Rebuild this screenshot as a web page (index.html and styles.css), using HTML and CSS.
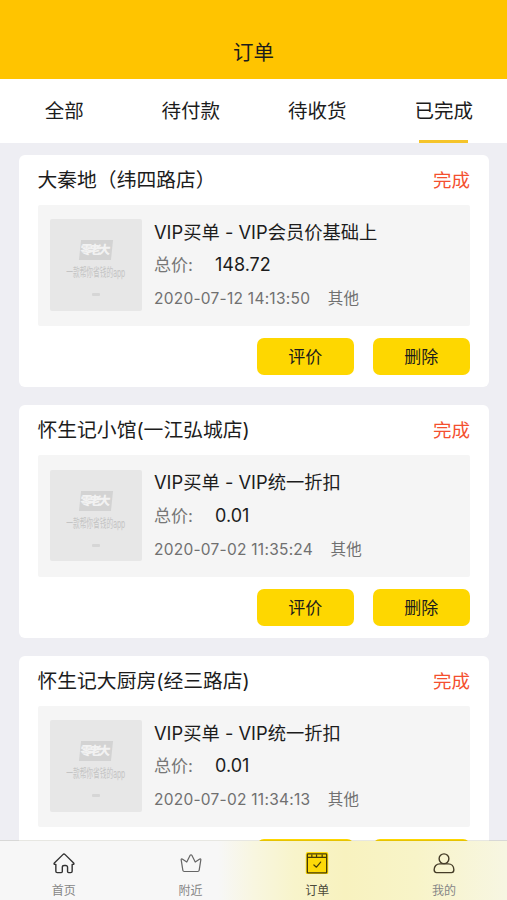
FILE: index.html
```html
<!DOCTYPE html>
<html lang="zh-CN">
<head>
<meta charset="utf-8">
<title>订单</title>
<link rel="stylesheet" href="styles.css">
</head>
<body>
<div class="app">
  <header class="header"><h1>订单</h1></header>
  <nav class="tabs">
    <a class="tab">全部</a>
    <a class="tab">待付款</a>
    <a class="tab">待收货</a>
    <a class="tab active">已完成</a>
  </nav>
  <main class="orders">
    <article class="card">
      <div class="card-head"><h2>大秦地（纬四路店）</h2><span class="status">完成</span></div>
      <div class="product">
        <div class="thumb"><span class="brand">零老大</span><span class="slogan">一款帮你省钱的app</span><span class="dots"></span></div>
        <div class="info">
          <p class="name">VIP买单 - VIP会员价基础上</p>
          <p class="price"><span class="label">总价:</span><span class="amount">148.72</span></p>
          <p class="meta"><time>2020-07-12 14:13:50</time><span>其他</span></p>
        </div>
      </div>
      <div class="actions"><button class="btn">评价</button><button class="btn">删除</button></div>
    </article>
    <article class="card">
      <div class="card-head"><h2>怀生记小馆(一江弘城店)</h2><span class="status">完成</span></div>
      <div class="product">
        <div class="thumb"><span class="brand">零老大</span><span class="slogan">一款帮你省钱的app</span><span class="dots"></span></div>
        <div class="info">
          <p class="name">VIP买单 - VIP统一折扣</p>
          <p class="price"><span class="label">总价:</span><span class="amount">0.01</span></p>
          <p class="meta"><time>2020-07-02 11:35:24</time><span>其他</span></p>
        </div>
      </div>
      <div class="actions"><button class="btn">评价</button><button class="btn">删除</button></div>
    </article>
    <article class="card">
      <div class="card-head"><h2>怀生记大厨房(经三路店)</h2><span class="status">完成</span></div>
      <div class="product">
        <div class="thumb"><span class="brand">零老大</span><span class="slogan">一款帮你省钱的app</span><span class="dots"></span></div>
        <div class="info">
          <p class="name">VIP买单 - VIP统一折扣</p>
          <p class="price"><span class="label">总价:</span><span class="amount">0.01</span></p>
          <p class="meta"><time>2020-07-02 11:34:13</time><span>其他</span></p>
        </div>
      </div>
      <div class="actions"><button class="btn">评价</button><button class="btn">删除</button></div>
    </article>
  </main>
  <nav class="tabbar">
    <a class="item">
      <svg class="icon" viewBox="0 0 24 24"><path stroke="#333" d="M3.300 13.200H2.300c-.9 0-1.200-.8-.6-1.400L10.800 2.800c.7-.7 1.700-.7 2.400 0l9.100 9c.6.6.3 1.400-.6 1.400h-1v7.300c0 .9-.6 1.500-1.500 1.500h-2.300c-.7 0-1.100-.4-1.100-1.100v-4.600c0-1.200-.8-1.900-2-1.900h-1.600c-1.200 0-2 .7-2 1.900v4.600c0 .7-.4 1.100-1.100 1.100H4.800c-.9 0-1.500-.6-1.500-1.500z"/></svg>
      <span>首页</span>
    </a>
    <a class="item">
      <svg class="icon" viewBox="0 0 24 24"><path stroke="#666" stroke-width="1.300" d="M1.500 8.200c-.1-.8.500-1.100 1.100-.7l4.900 3.200 3.600-7.200c.4-.7 1.400-.7 1.800 0l3.600 7.200 4.900-3.200c.6-.4 1.200-.1 1.100.7l-1.800 11.300c-.1.800-.7 1.300-1.500 1.300H4.800c-.8 0-1.400-.5-1.500-1.300z"/></svg>
      <span>附近</span>
    </a>
    <a class="item current">
      <svg class="icon" viewBox="0 0 24 24"><rect class="glow" x="0" y="0" width="24" height="24" rx="2"/><rect x="1.700" y="2" width="20.600" height="20.300" rx=".8" stroke="#453b09" stroke-width="1.400"/><path stroke="#453b09" stroke-width="1.300" d="M2 5.800h20M6.500 3v2.500M11.500 3v2.500M17.500 3v2.500M8.700 13.800l2.700 2.400 4.500-5.500"/></svg>
      <span>订单</span>
    </a>
    <a class="item">
      <svg class="icon" viewBox="0 0 24 24"><circle cx="12" cy="7.200" r="5.200" stroke="#453d28"/><path stroke="#453d28" d="M7.500 12.700h9c3.500 0 6 2.700 6 6.300 0 2-.8 3-2.500 3H4c-1.700 0-2.500-1-2.500-3 0-3.600 2.500-6.300 6-6.300z"/></svg>
      <span>我的</span>
    </a>
  </nav>
</div>
</body>
</html>
```
FILE: styles.css
```css
* { box-sizing: border-box; }
body {
  margin: 0;
  font-family: Inter, "Noto Sans CJK SC", sans-serif;
  color: #1c1c1c;
  background: #eeeef3;
}
h1, h2, p { margin: 0; font-weight: 400; }
.app { height: 900px; display: flex; flex-direction: column; overflow: hidden; position: relative; }
.header {
  height: 79px;
  flex: none;
  background: #ffc400;
  padding-top: 26px;
  text-align: center;
}
.header h1 { font-size: 20.5px; line-height: 54px; }
.tabs { flex: none; height: 64px; display: flex; background: #fff; padding-left: 1px; }
.tab {
  flex: 1;
  display: flex;
  flex-direction: column;
  align-items: center;
  font-size: 19.5px;
  line-height: 64px;
}
.tab.active::after { content: ""; flex: none; width: 49px; height: 3px; margin-top: -3px; background: #f5c42a; }
.orders { padding: 11.5px 18.5px 0 19px; display: flex; flex-direction: column; gap: 18px; }
.card { flex: none; height: 232.5px; background: #fff; border-radius: 6px; padding: 0 18.500px; }
.card-head { height: 50px; display: flex; justify-content: space-between; line-height: 50px; }
.card-head h2 { font-size: 19.800px; white-space: nowrap; }
.status { color: #f4502f; font-size: 18.500px; }
.product { height: 121.500px; background: #f5f5f5; border-radius: 2px; display: flex; gap: 12.500px; padding: 14.500px 12px 0 12.500px; }
.thumb {
  width: 91.500px;
  height: 91.500px;
  flex: none;
  background: #e7e7e7;
  border-radius: 2px;
  display: flex;
  flex-direction: column;
  align-items: center;
  padding-top: 21px;
  white-space: nowrap;
}
.brand {
  width: 32px;
  height: 20px;
  background: #d3d3d3;
  color: #f2f2f2;
  font-size: 12px;
  font-weight: 900;
  line-height: 20px;
  letter-spacing: -3px;
  padding-right: 4px;
  transform: skewX(-6deg);
  display: flex;
  justify-content: center;
}
.slogan { font-size: 12px; line-height: 20px; margin-top: 3px; color: #c4c4c4; transform: scaleX(.56); }
.dots { width: 8px; height: 3px; margin-top: 10px; background: #d6d6d6; border-radius: 1px; }
.info { margin-top: -4.500px; white-space: nowrap; }
.info p { height: 33.800px; line-height: 34px; }
.name { font-size: 18.300px; }
.price { display: flex; }
.label { width: 61px; color: #777; font-size: 17px; }
.amount { font-size: 18px; }
.meta { display: flex; gap: 17.500px; color: #707070; font-size: 15.500px; letter-spacing: .25px; }
.actions { display: flex; justify-content: flex-end; gap: 18.500px; padding-top: 12px; }
.btn {
  width: 97.500px;
  height: 37px;
  border: 0;
  border-radius: 7px;
  padding: 0 0 2px;
  background: #fed700;
  color: #1c1c1c;
  font: inherit;
  font-size: 17px;
}
.tabbar {
  position: absolute;
  inset: auto 0 0;
  height: 60px;
  display: flex;
  border-top: 1px solid rgba(60, 60, 20, .12);
  background: linear-gradient(90deg, #f7f7f7 43%, #f8f6e0 50%, #f8f4cb 58%, #f8f2bf 68%, #f8f4c8 82%, #f7f6e2 100%) padding-box;
}
.item { flex: 1; display: flex; flex-direction: column; align-items: center; padding: 10.500px 0 0 1px; font-size: 12px; line-height: 18px; color: #868686; }
.item span { margin-top: 8px; }
.icon { width: 24px; height: 24px; fill: none; stroke-width: 1.500; stroke-linejoin: round; stroke-linecap: round; }
.glow { fill: #fdd908; stroke: none; }
.current { color: #4b4939; }
```
